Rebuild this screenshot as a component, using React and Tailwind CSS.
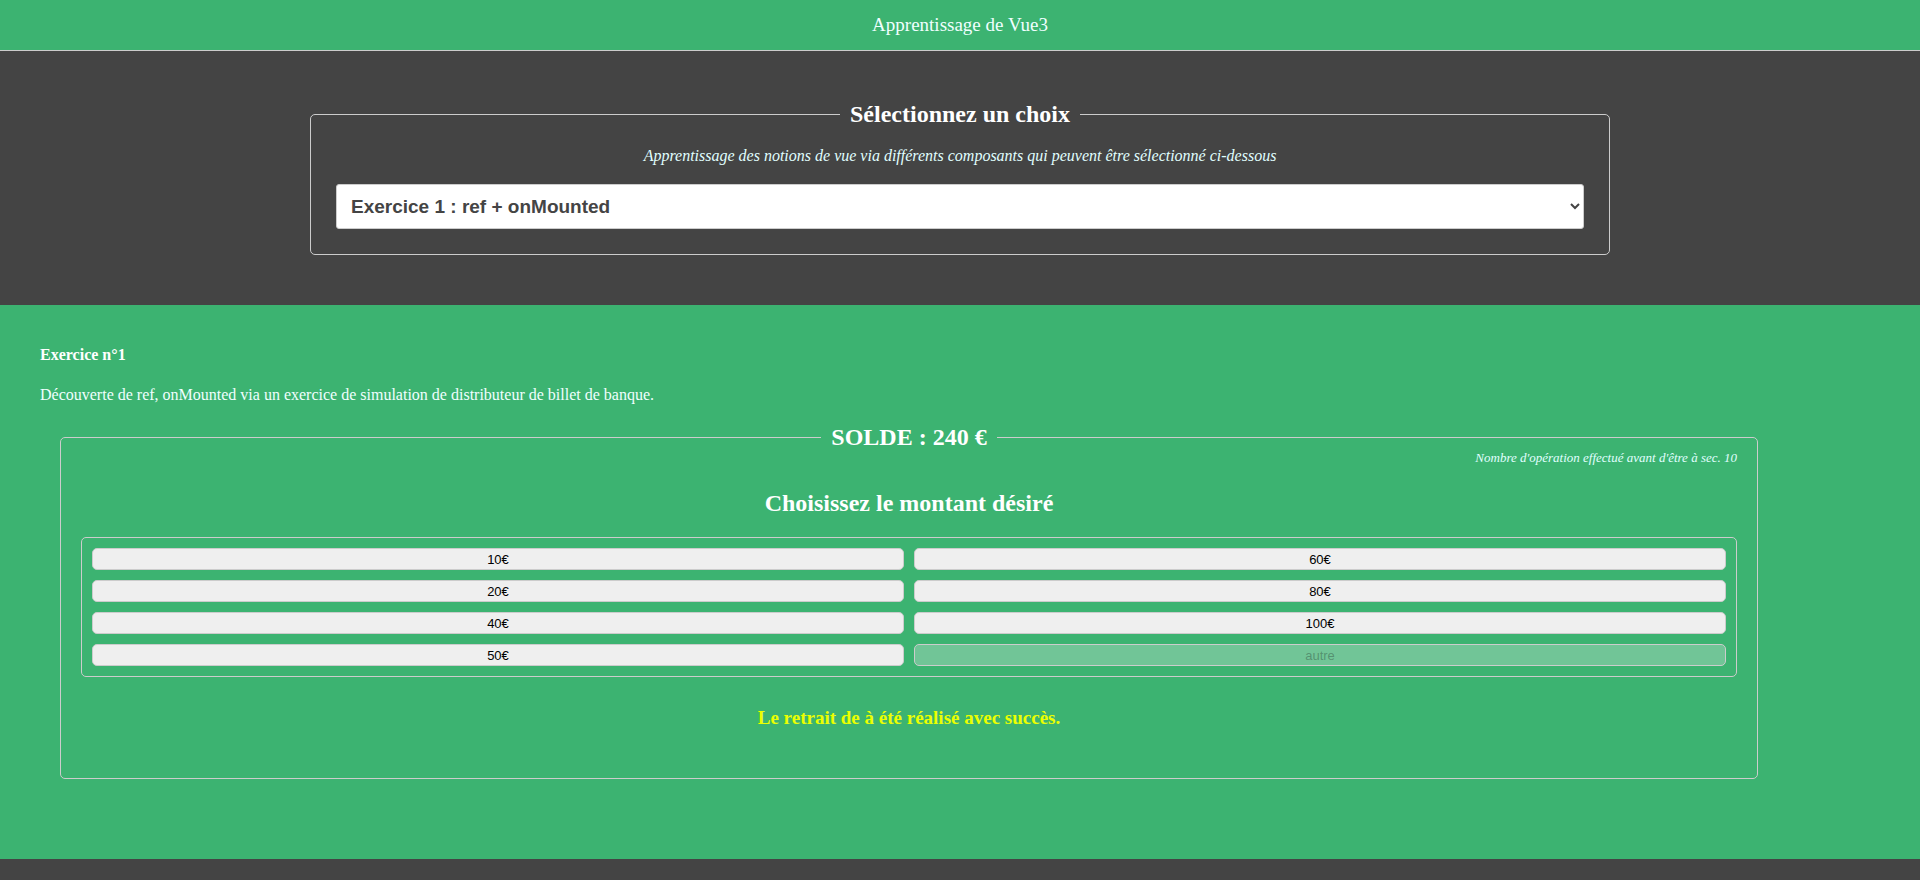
const withdrawals = [
  { label: "10€" },
  { label: "60€" },
  { label: "20€" },
  { label: "80€" },
  { label: "40€" },
  { label: "100€" },
  { label: "50€" },
  { label: "autre", disabled: true },
];

function Header() {
  return (
    <header className="border-b border-[#ccc] bg-[#3cb371] py-[14px] text-center text-[19px] leading-[22px] text-[#f0ffff]">
      Apprentissage de Vue3
    </header>
  );
}

function ExercisePicker() {
  return (
    <section className="px-5 py-[50px]">
      <fieldset className="mx-auto max-w-[1300px] rounded-[5px] border border-[#ccc] px-[25px] pb-[25px] text-center">
        <legend className="mx-auto px-[10px] text-2xl leading-[27px] font-bold text-white">
          Sélectionnez un choix
        </legend>
        <label
          htmlFor="exercise"
          className="my-[19px] block text-base leading-[18px] text-[#e0ffff] italic"
        >
          Apprentissage des notions de vue via différents composants qui peuvent être sélectionné ci-dessous
        </label>
        <select
          id="exercise"
          className="block h-[45px] w-full rounded-[3px] border border-[#ccc] bg-white px-[10px] font-['Liberation_Sans',sans-serif] text-[19px] font-bold text-[#444]"
        >
          <option>Exercice 1 : ref + onMounted</option>
        </select>
      </fieldset>
    </section>
  );
}

function CashMachine() {
  return (
    <fieldset className="ml-5 w-[calc(90%+42px)] rounded-[5px] border border-[#ccc] px-5 pb-[49px] text-center">
      <legend className="mx-auto px-[10px] text-2xl leading-[27px] font-bold text-white">
        SOLDE : 240 €
      </legend>
      <p className="text-right text-[13px] leading-[14px] text-[#e0ffff] italic">
        Nombre d'opération effectué avant d'être à sec. 10
      </p>
      <h2 className="mt-[25px] mb-5 text-2xl leading-[27px] font-bold text-white">
        Choisissez le montant désiré
      </h2>
      <div className="grid grid-cols-2 gap-[10px] rounded-[5px] border border-[#ccc] p-[10px]">
        {withdrawals.map(({ label, disabled }) => (
          <button
            key={label}
            type="button"
            disabled={disabled}
            className="h-[22px] rounded-[5px] border border-[#ccc] bg-[#efefef] font-['Liberation_Sans',sans-serif] text-[13px] leading-[15px] text-black disabled:bg-[#efefef]/30 disabled:text-[#101010]/30"
          >
            {label}
          </button>
        ))}
      </div>
      <p className="mt-[30px] text-[19px] leading-[22px] font-bold text-[#ebff00]">
        Le retrait de à été réalisé avec succès.
      </p>
    </fieldset>
  );
}

export default function App() {
  return (
    <div className="min-h-screen bg-[#444] font-['Liberation_Serif',serif]">
      <Header />
      <ExercisePicker />
      <main className="bg-[#3cb371] px-10 pt-10 pb-20 text-base leading-5 text-[#f0ffff]">
        <h1 className="font-bold text-white">Exercice n°1</h1>
        <p className="mt-5 mb-[19px]">
          Découverte de ref, onMounted via un exercice de simulation de distributeur de billet de banque.
        </p>
        <CashMachine />
      </main>
    </div>
  );
}
